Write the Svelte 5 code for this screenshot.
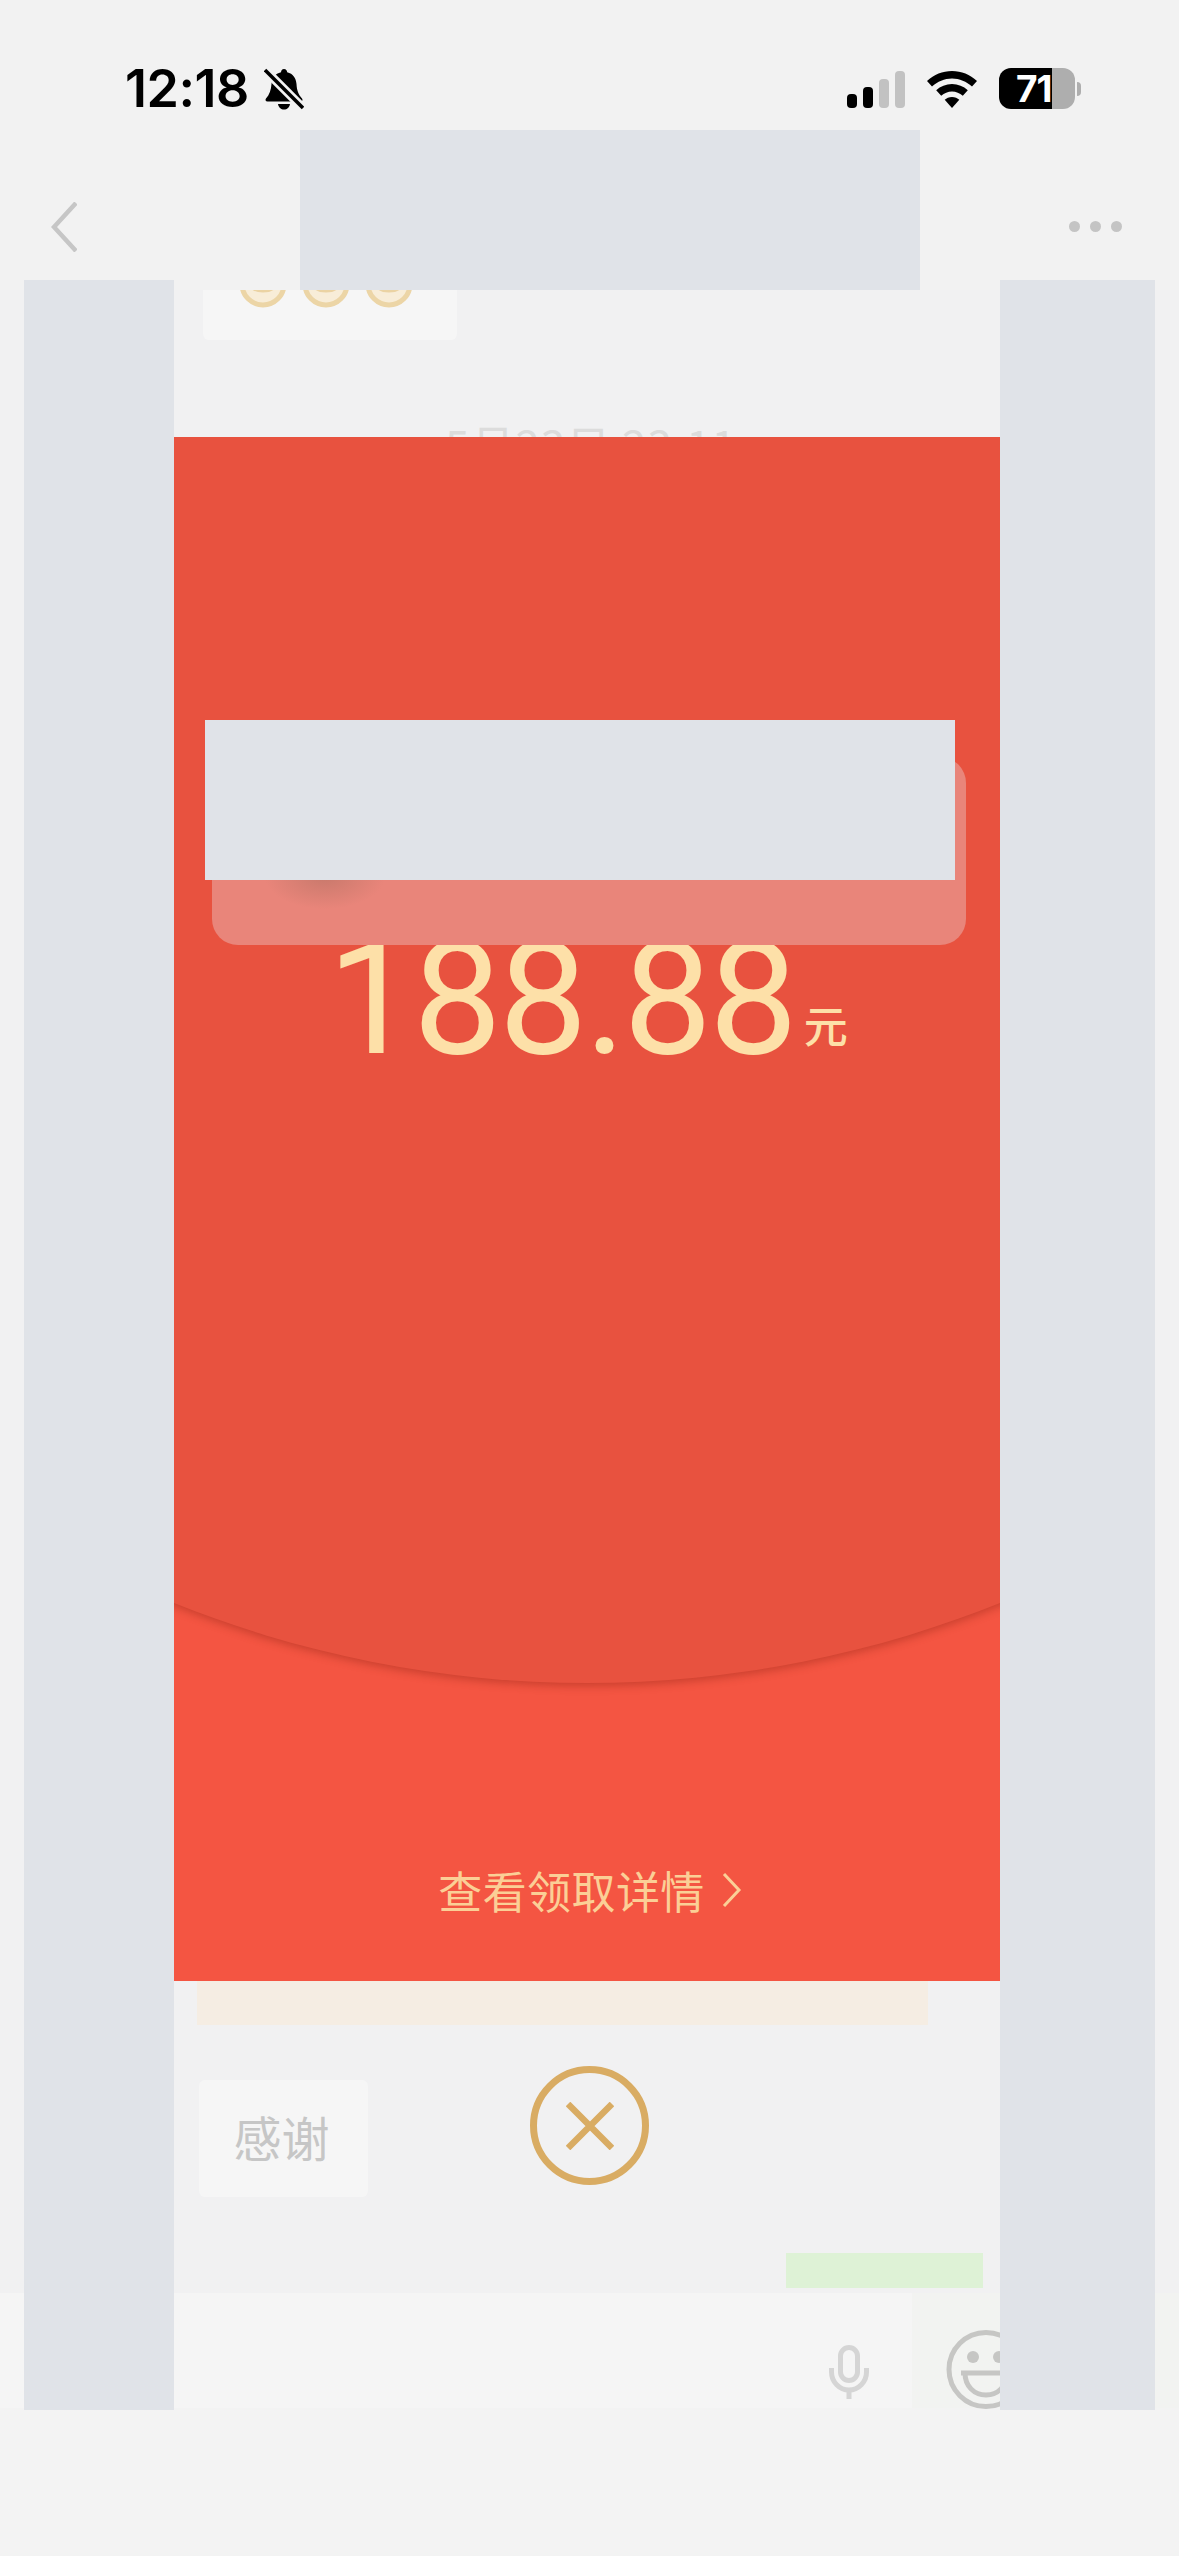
<script>
    const bars = [
        { h: 14, on: true },
        { h: 21, on: true },
        { h: 29, on: false },
        { h: 37, on: false },
    ];
    const coins = [0, 1, 2];
</script>

<div class="page">
    <header class="status">
        <div class="clock">
            <span class="time">12:18</span>
            <svg class="bell" viewBox="0 0 40 42" width="40" height="42">
                <path d="M20 1c2 0 3 1.500 3.200 3.200C29 5.500 32 10 32.500 16c.4 6 1.500 10 5.500 14.500 1 1.300.5 3-1.500 3H3.500c-2 0-2.500-1.700-1.500-3C5.500 26.500 7 22 7.500 16 8 10 11 5.500 17 4.200 17.200 2.500 18 1 20 1z" fill="#000"/>
                <path d="M14 36c.5 3.500 3 5.500 6 5.500s5.500-2 6-5.500z" fill="#000"/>
                <path d="M1 2l38 38" stroke="#f2f2f2" stroke-width="9"/>
                <path d="M1 2l38 38" stroke="#000" stroke-width="3.500"/>
            </svg>
        </div>
        <div class="indicators">
            <div class="signal">
                {#each bars as bar}
                    <span class="bar" class:on={bar.on} style="height: {bar.h}px"></span>
                {/each}
            </div>
            <svg class="wifi" viewBox="0 0 50 37" width="50" height="37">
                <path d="M25 0C15.500 0 7 3.600 0 10l5 5.600C10.500 10.600 17.500 7.500 25 7.500s14.500 3.100 20 8.100L50 10C43 3.600 34.500 0 25 0z" fill="#000"/>
                <path d="M25 13c-6 0-11.500 2.300-15.800 6.200l5 5.600c3-2.700 6.800-4.300 10.800-4.300s7.800 1.600 10.800 4.300l5-5.600C36.500 15.300 31 13 25 13z" fill="#000"/>
                <path d="M25 26c-3 0-5.500 1.100-7.300 2.800L25 37l7.300-8.200C30.500 27.100 28 26 25 26z" fill="#000"/>
            </svg>
            <div class="battery">
                <div class="cell"><span>71</span></div>
                <span class="nub"></span>
            </div>
        </div>
    </header>

    <nav class="navbar">
        <svg class="back" viewBox="0 0 26 50" width="26" height="50">
            <path d="M25 1L3 25l22 24" fill="none" stroke="#c6c6c6" stroke-width="4.500"/>
        </svg>
        <div class="more">
            <span></span><span></span><span></span>
        </div>
    </nav>

    <main class="chat">
        <div class="bubble coins-bubble">
            {#each coins as coin}
                <svg class="coin" viewBox="0 0 48 48" width="48" height="48">
                    <circle cx="24" cy="24" r="21" fill="#f8edd8" stroke="#ecd5a6" stroke-width="5"/>
                    <path d="M12 26c3 7 21 7 24 0M18 24l2 7M24 24v8M30 24l-2 7" fill="none" stroke="#ebd3a3" stroke-width="2.500"/>
                </svg>
            {/each}
        </div>
        <p class="date">5月23日 23:11</p>
        <div class="packet-card"></div>
        <div class="bubble thanks">感谢</div>
        <div class="reply"></div>
    </main>

    <footer class="inputbar">
        <svg class="mic" viewBox="0 0 42 54" width="42" height="54">
            <rect x="12.500" y="2.500" width="17" height="33" rx="8.500" fill="none" stroke="#d5d5d5" stroke-width="5"/>
            <path d="M3.500 23v4c0 10 8 18 17.500 18s17.500-8 17.500-18v-4" fill="none" stroke="#d5d5d5" stroke-width="5"/>
            <path d="M21 45v9" stroke="#d5d5d5" stroke-width="5"/>
        </svg>
        <svg class="smiley" viewBox="0 0 80 80" width="80" height="80">
            <circle cx="40" cy="39.500" r="37" fill="none" stroke="#c6c6c4" stroke-width="5"/>
            <circle cx="27" cy="27" r="6" fill="#c6c6c4"/>
            <circle cx="53" cy="27" r="6" fill="#c6c6c4"/>
            <path d="M15 43h50M19 43c0 13 9 22 21 22s21-9 21-22" fill="none" stroke="#c6c6c4" stroke-width="5"/>
        </svg>
    </footer>

    <section class="packet">
        <div class="flap"></div>
        <div class="amount">
            <span class="value">188.88</span>
            <span class="unit">元</span>
        </div>
        <div class="detail">
            <span>查看领取详情</span>
            <svg viewBox="0 0 20 34" width="20" height="34">
                <path d="M2 1l15 16L2 33" fill="none" stroke="#fbcf96" stroke-width="3"/>
            </svg>
        </div>
    </section>

    <div class="sender-card"></div>
    <div class="mask mask-sender"></div>
    <div class="mask mask-title"></div>
    <div class="mask mask-left"></div>
    <div class="mask mask-right"></div>

    <div class="close">
        <svg viewBox="0 0 48 48" width="48" height="48">
            <path d="M2 2l44 44M46 2L2 46" stroke="#d9ac63" stroke-width="6.500"/>
        </svg>
    </div>
</div>

<style>
    :global(body) {
        margin: 0;
        background: #f2f2f2;
    }
    .page {
        position: relative;
        width: 1179px;
        height: 2556px;
        overflow: hidden;
        display: flex;
        flex-direction: column;
        background: #f2f2f2;
        font-family: "Noto Sans CJK SC", "Liberation Sans", sans-serif;
    }

    .status {
        height: 43px;
        padding: 67px 98px 0 125px;
        display: flex;
        justify-content: space-between;
        flex-shrink: 0;
    }
    .clock {
        display: flex;
        align-items: center;
        gap: 15px;
    }
    .time {
        font-family: Inter, "Liberation Sans", sans-serif;
        font-size: 52px;
        font-weight: 600;
        line-height: 43px;
        letter-spacing: -0.5px;
        color: #000;
    }
    .indicators {
        display: flex;
        align-items: center;
        gap: 22px;
    }
    .signal {
        display: flex;
        align-items: flex-end;
        gap: 6px;
        height: 37px;
        margin-top: 2px;
    }
    .bar {
        width: 10px;
        border-radius: 4px;
        background: #c2c2c2;
    }
    .bar.on {
        background: #000;
    }
    .wifi {
        margin-top: 2px;
    }
    .battery {
        display: flex;
        align-items: center;
        gap: 2px;
    }
    .cell {
        width: 76px;
        height: 41px;
        box-sizing: border-box;
        padding-left: 17px;
        border-radius: 12px;
        background: linear-gradient(to right, #000 53px, #aeaeae 53px);
        display: flex;
        align-items: center;
    }
    .cell span {
        font-family: Inter, "Liberation Sans", sans-serif;
        font-size: 37px;
        font-weight: 700;
        letter-spacing: -1px;
        color: #fff;
    }
    .nub {
        width: 4px;
        height: 14px;
        border-radius: 0 7px 7px 0;
        background: #aeaeae;
    }

    .navbar {
        height: 88px;
        margin-top: 92px;
        padding: 0 57px 0 51px;
        display: flex;
        justify-content: space-between;
        align-items: flex-start;
        flex-shrink: 0;
    }
    .more {
        display: flex;
        gap: 10px;
        margin-top: 19px;
    }
    .more span {
        width: 11px;
        height: 11px;
        border-radius: 50%;
        background: #c4c4c4;
    }

    .chat {
        flex: 0 0 auto;
        height: 2003px;
        box-sizing: border-box;
        padding: 0 196px 0 199px;
        overflow: hidden;
        display: flex;
        flex-direction: column;
        background: #f1f1f2;
    }
    .bubble {
        background: #f6f6f6;
        border-radius: 6px;
    }
    .coins-bubble {
        width: 254px;
        height: 80px;
        margin: -30px 0 0 4px;
        box-sizing: border-box;
        padding-left: 36px;
        display: flex;
        gap: 15px;
        flex-shrink: 0;
    }
    .date {
        margin: 80px 0 0;
        height: 48px;
        text-align: center;
        font-size: 44px;
        line-height: 48px;
        letter-spacing: 1px;
        color: #dcdcdc;
    }
    .packet-card {
        width: 731px;
        height: 44px;
        margin: 1513px 0 0 -2px;
        background: #f5ede3;
        flex-shrink: 0;
    }
    .thanks {
        width: 165px;
        height: 117px;
        margin-top: 55px;
        padding-right: 4px;
        font-size: 48px;
        line-height: 113px;
        text-align: center;
        color: #c6c6c6;
        flex-shrink: 0;
    }
    .reply {
        width: 197px;
        height: 35px;
        margin: 56px 0 0 auto;
        background: #def2d6;
        flex-shrink: 0;
    }

    .inputbar {
        flex: 1;
        box-sizing: border-box;
        padding: 37px 0 0 828px;
        display: flex;
        align-items: flex-start;
        gap: 76px;
        background: linear-gradient(to right, #f5f5f5 912px, #f2f3f1 912px) top / 100% 115px no-repeat, #f3f3f3;
    }
    .mic {
        margin-top: 15px;
    }

    .packet {
        position: absolute;
        left: 174px;
        top: 437px;
        width: 826px;
        height: 1544px;
        overflow: hidden;
        background: #f45542;
        display: flex;
        flex-direction: column;
        align-items: center;
    }
    .flap {
        position: absolute;
        left: -693px;
        top: -966px;
        width: 2212px;
        height: 2212px;
        border-radius: 50%;
        background: #e8523f;
        box-shadow: 0 3px 8px rgba(150, 40, 25, 0.45);
    }
    .amount {
        position: relative;
        margin: 486px 0 0 1px;
        display: flex;
        align-items: baseline;
        gap: 9px;
        color: #fde0a8;
    }
    .value {
        font-family: Roboto, "Liberation Sans", sans-serif;
        font-size: 158px;
        font-weight: 400;
        line-height: 152px;
        letter-spacing: -3px;
    }
    .unit {
        font-size: 44px;
        font-weight: 500;
        line-height: 44px;
        transform: translateY(-10px);
    }
    .detail {
        position: relative;
        margin: auto 0 0 6px;
        padding-bottom: 63px;
        display: flex;
        align-items: center;
        gap: 17px;
        font-size: 44px;
        line-height: 56px;
        letter-spacing: 0.4px;
        color: #fbcf96;
    }

    .sender-card {
        position: absolute;
        left: 212px;
        top: 757px;
        width: 754px;
        height: 188px;
        border-radius: 26px;
        background: radial-gradient(ellipse 60px 32px at 113px 120px, #c9796c, rgba(201, 121, 108, 0)), #e9857a;
    }
    .mask {
        position: absolute;
        background: #e0e3e8;
    }
    .mask-sender {
        left: 205px;
        top: 720px;
        width: 750px;
        height: 160px;
    }
    .mask-title {
        left: 300px;
        top: 130px;
        width: 620px;
        height: 160px;
    }
    .mask-left {
        left: 24px;
        top: 280px;
        width: 150px;
        height: 2130px;
    }
    .mask-right {
        left: 1000px;
        top: 280px;
        width: 155px;
        height: 2130px;
    }

    .close {
        position: absolute;
        left: 530px;
        top: 2066px;
        width: 119px;
        height: 119px;
        box-sizing: border-box;
        border: 7px solid #d9ac63;
        border-radius: 50%;
        display: flex;
        align-items: center;
        justify-content: center;
    }
</style>
